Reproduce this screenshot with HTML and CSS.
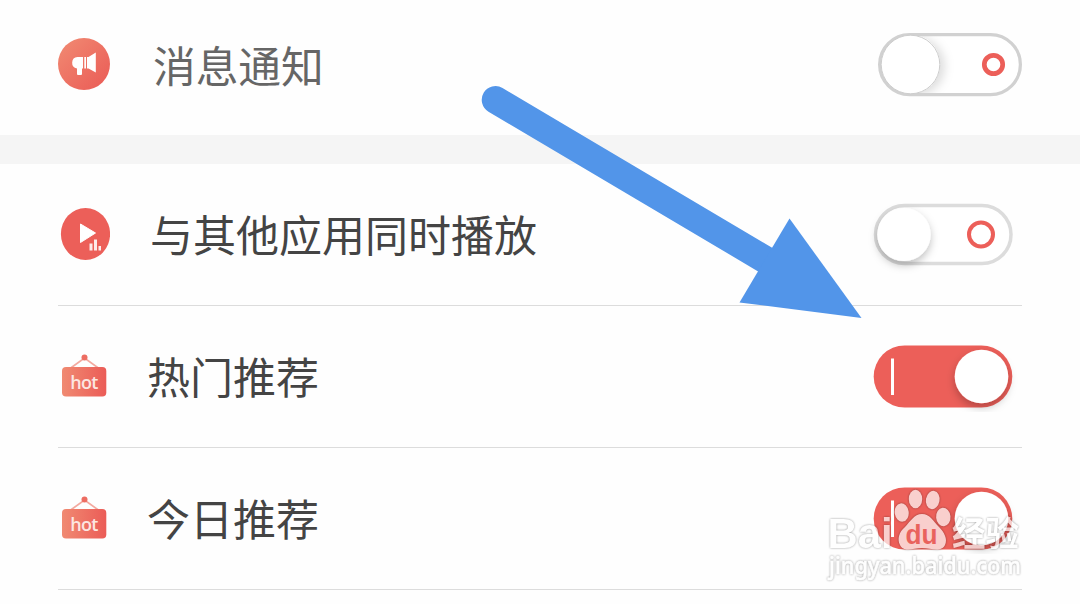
FILE: index.html
```html
<!DOCTYPE html>
<html lang="zh-CN">
<head>
<meta charset="utf-8">
<title>消息通知</title>
<link rel="stylesheet" href="styles.css">
</head>
<body>
<svg class="defs" width="0" height="0" aria-hidden="true">
  <defs>
    <linearGradient id="coral" x1="0" y1="0" x2="1" y2="1"><stop offset="0" stop-color="#f18b73"/><stop offset="1" stop-color="#ea5a55"/></linearGradient>
    <linearGradient id="sign" x1="0" y1="0" x2="1" y2="0"><stop offset="0" stop-color="#f08a72"/><stop offset="1" stop-color="#eb5c57"/></linearGradient>
    <filter id="knobShadow" x="-40%" y="-40%" width="180%" height="180%"><feDropShadow dx="0" dy="4" stdDeviation="4" flood-color="#000" flood-opacity=".25"/></filter>
    <filter id="sideShadow" x="-40%" y="-40%" width="190%" height="180%"><feDropShadow dx="5" dy="2" stdDeviation="5" flood-color="#000" flood-opacity=".13"/></filter>
    <clipPath id="track"><rect x="9.500" y="4" width="137" height="57" rx="28.500"/></clipPath>
    <symbol id="hot" viewBox="0 0 52 71">
      <path d="M12 27.500 26.500 17 41 27.500" fill="none" stroke="#f3aaa0" stroke-width="1.700"/>
      <circle cx="26.500" cy="16.500" r="3" fill="#ed6d62"/>
      <rect x="4" y="26" width="44.300" height="29.500" rx="4" fill="url(#sign)"/>
      <text x="26.300" y="48" text-anchor="middle" textLength="28" class="hot-text">hot</text>
    </symbol>
    <symbol id="switch-on" viewBox="0 0 150 71">
      <rect x="1.700" y="4.500" width="138.600" height="62" rx="31" fill="#ec5f59"/>
      <rect x="19" y="17.500" width="3" height="36.500" fill="#fff"/>
      <circle cx="109.500" cy="35.500" r="26.800" fill="#fff" filter="url(#knobShadow)"/>
    </symbol>
  </defs>
</svg>
<main class="settings">
  <section class="row row-notice">
    <svg class="icon" viewBox="0 0 52 71">
      <circle cx="26" cy="32" r="26" fill="url(#coral)"/>
      <path d="M19.500 25H25V36.500H24V42Q24 43 23 43H20Q19 43 19 42V36.500A5.800 5.800 0 0 1 19.500 25Z" fill="#fff"/>
      <path d="M26.300 25H28V36.500H26.300ZM29 25H30.500L37.800 20.500V40.500L30.500 36.500H29Z" fill="#fff"/>
    </svg>
    <span class="label">消息通知</span>
    <svg class="switch" viewBox="0 0 150 71">
      <rect x="7.600" y="2.600" width="140.800" height="60" rx="30" fill="#fff" stroke="#d1d1d1" stroke-width="3.200"/>
      <g clip-path="url(#track)"><circle cx="38.500" cy="32.300" r="29.500" fill="#fff" filter="url(#sideShadow)"/></g>
      <circle cx="38.500" cy="32.500" r="29.300" fill="#fff" stroke="#cdcdcd" stroke-width="1"/>
      <circle cx="121.500" cy="32.500" r="9.200" fill="#fff" stroke="#ec5f59" stroke-width="4.700"/>
    </svg>
  </section>
  <div class="gap"></div>
  <section class="row row-play">
    <svg class="icon" viewBox="0 0 52 71">
      <ellipse cx="27.500" cy="35" rx="24.600" ry="26" fill="#ec5f59"/>
      <path d="M22.500 25 37.500 34 22.500 43.500Z" fill="#fff" stroke="#fff" stroke-linejoin="round"/>
      <path d="M31.500 44.500h3v7h-3ZM36 40.500h3v11h-3ZM40.500 47h2.500v4.500h-2.500Z" fill="#fff" opacity=".88"/>
    </svg>
    <span class="label">与其他应用同时播放</span>
    <svg class="switch" viewBox="0 0 150 71">
      <rect x="3.500" y="6.600" width="135.500" height="58" rx="29" fill="#fff" stroke="#dcdcdc" stroke-width="3.500"/>
      <circle cx="32" cy="35.500" r="26.600" fill="#fff" filter="url(#knobShadow)"/>
      <circle cx="109" cy="35.500" r="12" fill="#fff" stroke="#ec5f59" stroke-width="4"/>
    </svg>
  </section>
  <section class="row row-recommend">
    <svg class="icon"><use href="#hot"/></svg>
    <span class="label">热门推荐</span>
    <svg class="switch"><use href="#switch-on"/></svg>
  </section>
  <section class="row row-recommend">
    <svg class="icon"><use href="#hot"/></svg>
    <span class="label">今日推荐</span>
    <svg class="switch"><use href="#switch-on"/></svg>
  </section>
</main>

<svg class="arrow" viewBox="0 0 400 260">
  <path d="M25.500 29.800 311 199" fill="none" stroke="#5295e9" stroke-width="27.500" stroke-linecap="round"/>
  <path d="M319.500 148.500 391.500 248 269.500 232.500Z" fill="#5295e9"/>
</svg>

<svg class="watermark" viewBox="0 0 225 129">
  <g class="mark">
    <text x="12.500" y="73" textLength="65" lengthAdjust="spacingAndGlyphs" class="brand">Bai</text>
    <ellipse cx="86.700" cy="37.500" rx="7" ry="9.200" transform="rotate(-8 86.700 37.500)"/>
    <ellipse cx="100.500" cy="24" rx="6.700" ry="9.300"/>
    <ellipse cx="117.700" cy="25" rx="6.800" ry="9.200" transform="rotate(10 117.700 25)"/>
    <ellipse cx="128.300" cy="42" rx="7.200" ry="9.200" transform="rotate(-5 128.300 42)"/>
    <path d="M107 39C99 39 95 47 90 52C84 57 82 64 85 70C89 78 98 73 107 73C116 73 126 78 130 70C133 64 129 57 124 52C118 46 115 39 107 39Z"/>
    <text x="137" y="71" textLength="67" lengthAdjust="spacingAndGlyphs" class="jingyan">经验</text>
    <text x="14" y="98.500" textLength="192" lengthAdjust="spacingAndGlyphs" class="site">jingyan.baidu.com</text>
  </g>
  <text x="90.500" y="68.500" textLength="32" lengthAdjust="spacingAndGlyphs" class="du">du</text>
</svg>
</body>
</html>
```

FILE: styles.css
```css
body {
  margin: 0;
  width: 1080px;
  height: 604px;
  overflow: hidden;
  position: relative;
  background: #fefefe;
  font-family: "Noto Sans CJK SC", sans-serif;
}
.defs { position: absolute; }
.row {
  display: flex;
  align-items: center;
  height: 141px;
  margin: 0 58px;
  border-bottom: 1px solid #dcdcdc;
}
.row-notice { height: 135px; border-bottom: 0; }
.gap { height: 29px; background: #f5f5f5; }
.icon { width: 52px; height: 71px; flex: none; }
.switch { width: 150px; height: 71px; flex: none; margin-left: auto; overflow: visible; }
.label {
  margin-left: 40px;
  padding-bottom: 4px;
  font-size: 43px;
  line-height: 60px;
  white-space: nowrap;
  color: #444;
}
.row-notice .label { margin-left: 43px; padding-bottom: 8px; font-size: 42.7px; color: #666; }
.row-recommend .label { margin-left: 37px; }
.hot-text {
  font: 600 18px "Open Sans", sans-serif;
  fill: #fce6e1;
}
.arrow { position: absolute; left: 470px; top: 70px; width: 400px; height: 260px; }
.watermark { position: absolute; left: 815px; top: 475px; width: 225px; height: 129px; }
.mark {
  fill: #fff;
  opacity: .7;
  filter: drop-shadow(0 0 .8px rgba(0, 0, 0, .55));
}
.brand { font: bold 43px "Liberation Sans", sans-serif; }
.du { font: bold 27px "Liberation Sans", sans-serif; fill: #e9625d; }
.jingyan { font: bold 34px "Noto Sans CJK SC", sans-serif; }
.site { font: 500 23px "Noto Sans", sans-serif; stroke: #fff; stroke-width: .6px; }
```
